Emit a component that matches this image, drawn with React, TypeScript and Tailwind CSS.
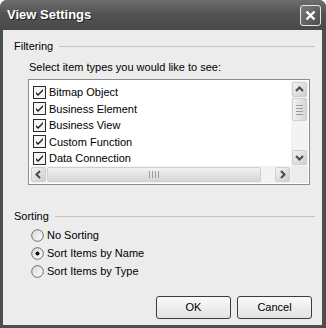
import React from "react";

const font = { fontFamily: '"Liberation Sans", Arial, sans-serif' };

function Check() {
  return (
    <svg width="13" height="13" viewBox="0 0 13 13" className="shrink-0">
      <rect x="0.5" y="0.5" width="12" height="12" fill="#f4f4f4" stroke="#2a2a2a" />
      <path d="M3 6 L5 8 L10 3 L10 5 L5 10 L3 8 Z" fill="#1e1e1e" />
    </svg>
  );
}

function Radio({ on }: { on?: boolean }) {
  return (
    <svg width="13" height="13" viewBox="0 0 13 13" className="shrink-0">
      <defs>
        <linearGradient id="rg" x1="0" y1="0" x2="1" y2="1">
          <stop offset="0" stopColor="#d8d8d8" />
          <stop offset="1" stopColor="#ffffff" />
        </linearGradient>
      </defs>
      <circle cx="6.5" cy="6.5" r="5.8" fill="url(#rg)" stroke="#6a6a6a" />
      {on && <circle cx="6.5" cy="6.5" r="2" fill="#111" />}
    </svg>
  );
}

function ArrowBtn({ dir }: { dir: "up" | "down" | "left" | "right" }) {
  const d =
    dir === "up"
      ? "M3 8 L6.5 4.5 L10 8"
      : dir === "down"
      ? "M3 5 L6.5 8.5 L10 5"
      : dir === "left"
      ? "M8 3 L4.5 6.5 L8 10"
      : "M5 3 L8.5 6.5 L5 10";
  return (
    <div className="w-[15px] h-[15px] shrink-0 rounded-[2px] border border-[#cfcfcf] bg-gradient-to-br from-[#f4f4f4] to-[#cdcdcd] flex items-center justify-center">
      <svg width="13" height="13" viewBox="0 0 13 13" className="shrink-0">
        <path d={d} fill="none" stroke="#4a4a4a" strokeWidth="2" />
      </svg>
    </div>
  );
}

export default function App() {
  const items = ["Bitmap Object", "Business Element", "Business View", "Custom Function", "Data Connection"];
  return (
    <div className="w-[326px] h-[328px] bg-white" style={font}>
      <div className="w-[326px] h-[328px] bg-[#4d4d4d] rounded-t-[7px] flex flex-col">
        {/* title bar */}
        <div className="h-[30px] shrink-0 rounded-t-[7px] bg-gradient-to-b from-[#6e6e6e] via-[#515151] to-[#4a4a4a] flex items-center pl-[7px] pr-[5px]">
          <span className="text-white font-bold text-[13px] flex-1 [text-shadow:1px_1px_0_#222]">View Settings</span>
          <div className="w-[21px] h-[21px] mt-[1px] rounded-[3px] border border-[#e6e6e6] bg-gradient-to-br from-[#7a7a7a] to-[#4e4e4e] flex items-center justify-center">
            <svg width="13" height="13" viewBox="0 0 13 13">
              <path d="M2.5 2.5 L10.5 10.5 M10.5 2.5 L2.5 10.5" stroke="#fff" strokeWidth="2.4" />
            </svg>
          </div>
        </div>
        {/* client */}
        <div className="flex-1 ml-[3px] mr-[4px] mb-[3px] bg-[#ececec] flex flex-col text-[11px] text-black pl-[11px] pr-[7px] pt-[9px]">
          <div className="flex items-center h-[14px] gap-[6px]">
            <span>Filtering</span>
            <div className="flex-1 h-px bg-[#c4c4c4] mt-[1px]" />
          </div>
          <div className="mt-[7px] pl-[15px] h-[14px] leading-[14px]">Select item types you would like to see:</div>
          {/* list box */}
          <div className="mt-[5px] ml-[14px] w-[282px] h-[106px] border border-[#8c8c8c] bg-white p-[1px] flex flex-col">
            <div className="flex flex-1 min-h-0">
              <div className="flex-1 pt-[3px] pl-[3px] flex flex-col">
                {items.map((t) => (
                  <div key={t} className="h-[17px] flex items-center gap-[3px]">
                    <Check />
                    <span>{t}</span>
                  </div>
                ))}
              </div>
              <div className="w-[17px] shrink-0 bg-[#f3f3f3] flex flex-col items-center pt-[1px] pb-[1px]">
                <ArrowBtn dir="up" />
                <div className="mt-[1px] w-[15px] h-[23px] shrink-0 rounded-[2px] border border-[#cfcfcf] bg-gradient-to-r from-[#f2f2f2] to-[#d6d6d6] flex flex-col items-center justify-center gap-[2px]">
                  <div className="w-[7px] h-px bg-[#9a9a9a]" />
                  <div className="w-[7px] h-px bg-[#9a9a9a]" />
                  <div className="w-[7px] h-px bg-[#9a9a9a]" />
                  <div className="w-[7px] h-px bg-[#9a9a9a]" />
                </div>
                <div className="flex-1" />
                <ArrowBtn dir="down" />
              </div>
            </div>
            <div className="h-[17px] flex shrink-0">
              <div className="flex-1 min-w-0 bg-[#f3f3f3] flex items-center pl-[1px] pr-[1px]">
                <ArrowBtn dir="left" />
                <div className="ml-[1px] w-[214px] shrink-0 h-[15px] rounded-[2px] border border-[#cfcfcf] bg-gradient-to-b from-[#f2f2f2] to-[#d6d6d6] flex items-center justify-center gap-[2px]">
                  <div className="w-px h-[7px] bg-[#9a9a9a]" />
                  <div className="w-px h-[7px] bg-[#9a9a9a]" />
                  <div className="w-px h-[7px] bg-[#9a9a9a]" />
                  <div className="w-px h-[7px] bg-[#9a9a9a]" />
                </div>
                <div className="flex-1" />
                <ArrowBtn dir="right" />
              </div>
              <div className="w-[17px] shrink-0 bg-[#ececec]" />
            </div>
          </div>
          <div className="mt-[24px] flex items-center h-[14px] gap-[6px]">
            <span>Sorting</span>
            <div className="flex-1 h-px bg-[#c4c4c4] mt-[1px]" />
          </div>
          <div className="mt-[3px] pl-[17px] flex flex-col">
            {[
              ["No Sorting", false],
              ["Sort Items by Name", true],
              ["Sort Items by Type", false],
            ].map(([t, on]) => (
              <div key={t as string} className="h-[18px] flex items-center gap-[3px]">
                <Radio on={on as boolean} />
                <span>{t as string}</span>
              </div>
            ))}
          </div>
          <div className="flex-1" />
          <div className="flex justify-end gap-[6px] pr-[3px] mb-[6px]">
            <button className="w-[75px] h-[23px] rounded-[3px] border border-[#3c3c3c] bg-gradient-to-b from-[#fafafa] to-[#e2e2e2] text-[11px]">OK</button>
            <button className="w-[75px] h-[23px] rounded-[3px] border border-[#3c3c3c] bg-gradient-to-b from-[#fafafa] to-[#e2e2e2] text-[11px]">Cancel</button>
          </div>
        </div>
      </div>
    </div>
  );
}
